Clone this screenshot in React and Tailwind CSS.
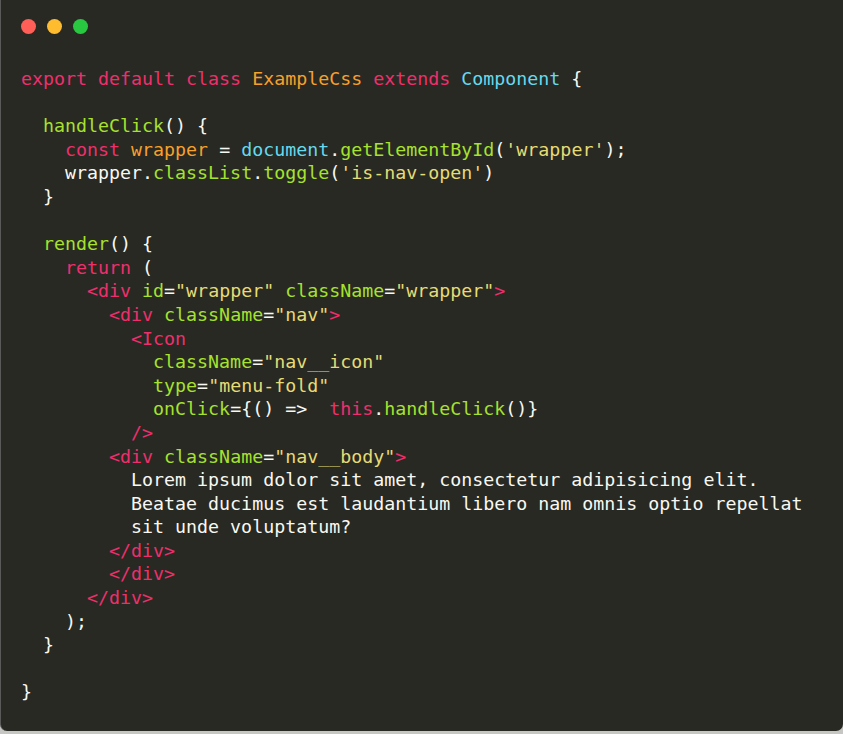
import React from 'react';

const P = 'text-[#ee2f6c]';
const O = 'text-[#f7a02b]';
const G = 'text-[#a6e22e]';
const Y = 'text-[#e6db74]';
const C = 'text-[#66d9ef]';
const W = 'text-[#f8f8f2]';

const lines = [
  [[P, 'export default class '], [O, 'ExampleCss '], [P, 'extends '], [C, 'Component'], [W, ' {']],
  [],
  [[W, '  '], [G, 'handleClick'], [W, '() {']],
  [[W, '    '], [P, 'const '], [O, 'wrapper'], [W, ' = '], [C, 'document'], [W, '.'], [G, 'getElementById'], [W, '('], [Y, "'wrapper'"], [W, ');']],
  [[W, '    wrapper.'], [G, 'classList'], [W, '.'], [G, 'toggle'], [W, '('], [Y, "'is-nav-open'"], [W, ')']],
  [[W, '  }']],
  [],
  [[W, '  '], [G, 'render'], [W, '() {']],
  [[W, '    '], [P, 'return'], [W, ' (']],
  [[W, '      '], [P, '<div '], [G, 'id'], [W, '='], [Y, '"wrapper" '], [G, 'className'], [W, '='], [Y, '"wrapper"'], [P, '>']],
  [[W, '        '], [P, '<div '], [G, 'className'], [W, '='], [Y, '"nav"'], [P, '>']],
  [[W, '          '], [P, '<Icon']],
  [[W, '            '], [G, 'className'], [W, '='], [Y, '"nav__icon"']],
  [[W, '            '], [G, 'type'], [W, '='], [Y, '"menu-fold"']],
  [[W, '            '], [G, 'onClick'], [W, '={() =>  '], [P, 'this'], [W, '.'], [G, 'handleClick'], [W, '()}']],
  [[W, '          '], [P, '/>']],
  [[W, '        '], [P, '<div '], [G, 'className'], [W, '='], [Y, '"nav__body"'], [P, '>']],
  [[W, '          Lorem ipsum dolor sit amet, consectetur adipisicing elit.']],
  [[W, '          Beatae ducimus est laudantium libero nam omnis optio repellat']],
  [[W, '          sit unde voluptatum?']],
  [[W, '        '], [P, '</div>']],
  [[W, '        '], [P, '</div>']],
  [[W, '      '], [P, '</div>']],
  [[W, '    );']],
  [[W, '  }']],
  [],
  [[W, '}']],
];

export default function App() {
  return (
    <div className="w-[843px] h-[734px] bg-[#c6c6c4] overflow-hidden">
      <div className="h-[731px] bg-[#282923] border-l border-[#5a5a58] rounded-b-[7px]">
        <div className="flex gap-[11px] pl-[20px] pt-[19px]">
          <span className="w-[15px] h-[15px] rounded-full bg-[#ff5f57]" />
          <span className="w-[15px] h-[15px] rounded-full bg-[#febc2e]" />
          <span className="w-[15px] h-[15px] rounded-full bg-[#28c840]" />
        </div>
        <div
          className="pl-[20px] pt-[33px] text-[18.3px] leading-[23.6px] whitespace-pre"
          style={{ fontFamily: '"DejaVu Sans Mono", monospace' }}
        >
          {lines.map((line, i) => (
            <div key={i} className="h-[23.6px]">
              {line.map(([cls, txt], j) => (
                <span key={j} className={cls}>{txt}</span>
              ))}
            </div>
          ))}
        </div>
      </div>
    </div>
  );
}
